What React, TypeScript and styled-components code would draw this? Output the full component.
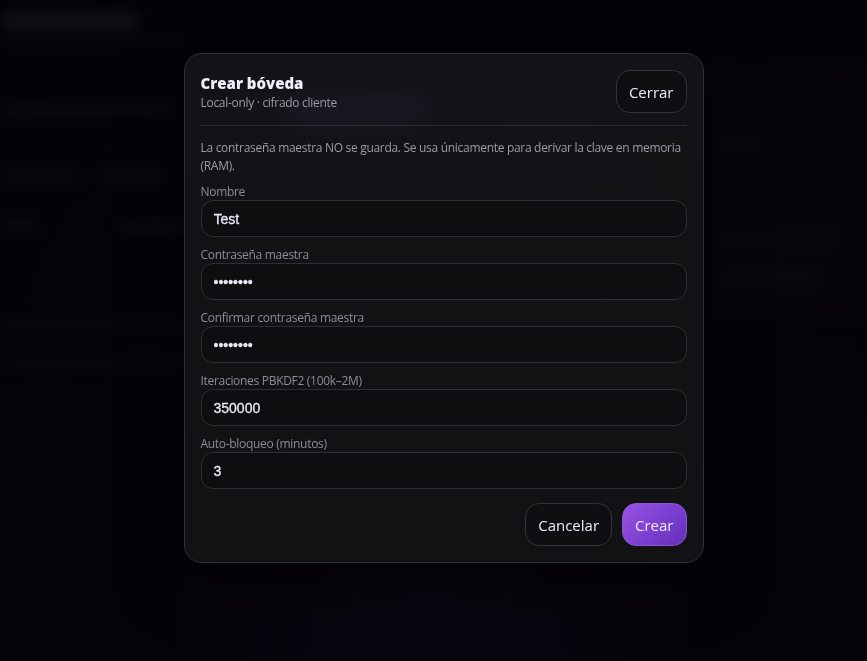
import styled, { createGlobalStyle } from 'styled-components'

const GlobalStyle = createGlobalStyle`
  html, body {
    margin: 0;
    padding: 0;
    background: #05040a;
    font-family: "Open Sans", "Noto Sans", "Liberation Sans", sans-serif;
  }
  * { box-sizing: border-box; }
`

const Page = styled.div`
  position: relative;
  width: 100%;
  height: 661px;
  overflow: hidden;
  background: radial-gradient(ellipse at 50% 95%, #110a1c 0%, #08060f 45%, #05040a 100%);
`

// the app behind the dialog, blurred out
const Behind = styled.div`
  filter: blur(7px);
  opacity: 0.75;
  padding-top: 14px;
  display: flex;
  flex-direction: column;
  gap: 8px;
`

const BgTitle = styled.div`
  height: 14px;
  width: 140px;
  border-radius: 6px;
  background: #2b2934;
`

const BgSub = styled.div`
  height: 8px;
  width: 190px;
  border-radius: 4px;
  background: #15131c;
`

const BgBody = styled.div`
  display: grid;
  grid-template-columns: 700px 1fr;
  margin-top: 8px;
`

const BgLeft = styled.div`
  display: flex;
  flex-direction: column;
`

const BgRow = styled.div<{ $mt: number }>`
  display: flex;
  gap: 18px;
  align-items: center;
  height: 30px;
  margin-top: ${p => p.$mt}px;
`

const BgBar = styled.div<{ $w: number; $tone?: string; $h?: number }>`
  width: ${p => p.$w}px;
  height: ${p => p.$h ?? 10}px;
  border-radius: 6px;
  background: ${p => p.$tone ?? '#1a1723'};
`

const BgRight = styled.div`
  background: #0c0a15;
  height: 260px;
  display: flex;
  flex-direction: column;
  padding: 0 20px;
`

const Overlay = styled.div`
  position: absolute;
  inset: 0;
  background: rgba(0, 0, 0, 0.4);
  display: flex;
  justify-content: center;
  align-items: flex-start;
  padding: 53px 0 0 20px;
`

const Modal = styled.div`
  width: 520px;
  border: 1px solid #323137;
  border-radius: 18px;
  background: linear-gradient(175deg, rgba(24, 23, 28, 0.8) 0%, rgba(20, 20, 23, 0.92) 45%, #121214 100%);
  backdrop-filter: blur(8px);
  padding: 16px 16px 16px;
  box-shadow: 0 20px 60px rgba(0, 0, 0, 0.6);
`

const Header = styled.div`
  display: flex;
  justify-content: space-between;
  align-items: center;
  padding-bottom: 12px;
  border-bottom: 1px solid #2d2c33;
`

const Titles = styled.div`
  display: flex;
  flex-direction: column;
  gap: 2px;
  padding-top: 1px;
`

const Title = styled.h2`
  margin: 0;
  font-size: 15px;
  line-height: 20px;
  font-weight: 800;
  color: #f1eefc;
`

const Sub = styled.div`
  font-size: 12px;
  line-height: 16px;
  letter-spacing: -0.3px;
  color: #9c9aa5;
`

const Button = styled.button<{ $primary?: boolean }>`
  height: 43px;
  padding: 0 12px;
  border-radius: 14px;
  font-family: "Open Sans", "Noto Sans", sans-serif;
  font-size: 15px;
  color: #eeeaf8;
  cursor: pointer;
  border: 1px solid ${p => (p.$primary ? '#8c52dc' : '#34333a')};
  background: ${p =>
    p.$primary ? 'linear-gradient(135deg, #9a52e2 0%, #7a3fd0 55%, #6330b8 100%)' : '#0f0f12'};
`

const Note = styled.p`
  margin: 13px 0 0;
  font-size: 12px;
  line-height: 18px;
  letter-spacing: -0.3px;
  color: #9d9ba5;
`

const Form = styled.div`
  display: flex;
  flex-direction: column;
  gap: 10px;
  margin-top: 9px;
`

const Field = styled.label`
  display: flex;
  flex-direction: column;
`

const Label = styled.span`
  font-size: 12px;
  line-height: 16px;
  letter-spacing: -0.3px;
  color: #8e8c96;
`

const Input = styled.input`
  height: 37px;
  width: 100%;
  border-radius: 12px;
  border: 1px solid #2f2e34;
  background: #0e0e10;
  color: #ebe7f8;
  padding: 0 12px;
  font-family: "Liberation Sans", Arial, sans-serif;
  font-size: 14px;
  font-weight: 400;
  -webkit-text-stroke: 0.3px #ebe7f8;
  outline: none;
`

const Footer = styled.div`
  display: flex;
  justify-content: flex-end;
  gap: 10px;
  margin-top: 14px;
`

const fields = [
  { label: 'Nombre', value: 'Test', type: 'text' },
  { label: 'Contraseña maestra', value: 'secreto1', type: 'password' },
  { label: 'Confirmar contraseña maestra', value: 'secreto1', type: 'password' },
  { label: 'Iteraciones PBKDF2 (100k–2M)', value: '350000', type: 'text' },
  { label: 'Auto-bloqueo (minutos)', value: '3', type: 'text' },
]

export default function App() {
  return (
    <>
      <GlobalStyle />
      <Page>
        <Behind>
          <BgTitle />
          <BgSub />
          <BgBody>
            <BgLeft>
              <BgRow $mt={36}>
                <BgBar $w={180} />
                <BgBar $w={70} $tone="transparent" />
                <BgBar $w={140} $h={30} $tone="#6a3ca8" />
                <BgBar $w={30} $tone="transparent" />
                <BgBar $w={115} $h={14} $tone="#2a2636" />
              </BgRow>
              <BgRow $mt={35}>
                <BgBar $w={80} />
                <BgBar $w={70} />
              </BgRow>
              <BgRow $mt={20}>
                <BgBar $w={40} />
                <BgBar $w={40} $tone="transparent" />
                <BgBar $w={90} />
              </BgRow>
              <BgRow $mt={70}>
                <BgBar $w={200} $tone="#141219" />
              </BgRow>
              <BgRow $mt={5}>
                <BgBar $w={190} $tone="#141219" />
              </BgRow>
            </BgLeft>
            <BgRight>
              <BgRow $mt={70}>
                <BgBar $w={40} $tone="#1a1724" />
              </BgRow>
              <BgRow $mt={65}>
                <BgBar $w={110} $tone="#1a1724" />
              </BgRow>
              <BgRow $mt={8}>
                <BgBar $w={100} $tone="#1a1724" />
              </BgRow>
            </BgRight>
          </BgBody>
        </Behind>
        <Overlay>
          <Modal>
            <Header>
              <Titles>
                <Title>Crear bóveda</Title>
                <Sub>Local-only · cifrado cliente</Sub>
              </Titles>
              <Button>Cerrar</Button>
            </Header>
            <Note>
              La contraseña maestra NO se guarda. Se usa únicamente para derivar la clave en memoria (RAM).
            </Note>
            <Form>
              {fields.map(f => (
                <Field key={f.label}>
                  <Label>{f.label}</Label>
                  <Input type={f.type} defaultValue={f.value} />
                </Field>
              ))}
            </Form>
            <Footer>
              <Button>Cancelar</Button>
              <Button $primary>Crear</Button>
            </Footer>
          </Modal>
        </Overlay>
      </Page>
    </>
  )
}
